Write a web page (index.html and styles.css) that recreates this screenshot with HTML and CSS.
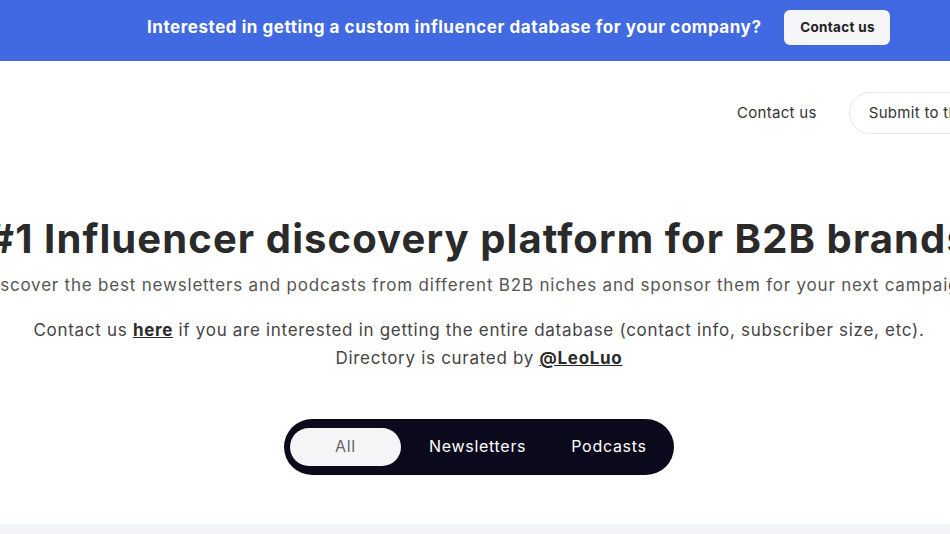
FILE: index.html
```html
<!DOCTYPE html>
<html lang="en">
<head>
<meta charset="utf-8">
<title>B2B Influencer discovery</title>
<link rel="stylesheet" href="styles.css">
</head>
<body>
<div class="banner">
  <p class="banner-text">Interested in getting a custom influencer database for your company?</p>
  <a class="banner-btn" href="#">Contact us</a>
</div>
<div class="page">
  <nav class="nav">
    <a class="nav-link" href="#">Contact us</a>
    <a class="nav-btn" href="#">Submit to the directory</a>
  </nav>
  <header class="hero">
    <h1 class="hero-title">#1 Influencer discovery platform for B2B brands</h1>
    <p class="hero-sub">Discover the best newsletters and podcasts from different B2B niches and sponsor them for your next campaign.</p>
    <p class="hero-note">Contact us <a href="#">here</a> if you are interested in getting the entire database (contact info, subscriber size, etc).</p>
    <p class="hero-note">Directory is curated by <a href="#">@LeoLuo</a></p>
  </header>
  <div class="tabs-row">
    <div class="tabs">
      <span class="tab tab-active">All</span>
      <span class="tab tab-news">Newsletters</span>
      <span class="tab tab-pod">Podcasts</span>
    </div>
  </div>
</div>
<div class="band"></div>
</body>
</html>
```
FILE: styles.css
```css
html, body {
  margin: 0;
  padding: 0;
  overflow: hidden;
  background: #ffffff;
  font-family: Inter, "Noto Sans", sans-serif;
}
a { color: inherit; text-decoration: none; }
p, h1 { margin: 0; }

.banner {
  height: 61px;
  box-sizing: border-box;
  padding-bottom: 7px;
  background: #4169e1;
  display: flex;
  align-items: center;
  padding-left: 147px;
  gap: 23px;
}
.banner-text {
  color: #ffffff;
  font-weight: 700;
  font-size: 17px;
  letter-spacing: 0.55px;
  white-space: nowrap;
}
.banner-btn {
  display: flex;
  align-items: center;
  justify-content: center;
  width: 106px;
  height: 35px;
  background: #f6f6f8;
  border-radius: 6px;
  color: #222;
  font-weight: 700;
  font-size: 13.5px;
  letter-spacing: 0.3px;
}

.page {
  width: 958px;
}
.nav {
  display: flex;
  align-items: center;
  padding: 30px 0 0 737px;
  gap: 32px;
  height: 44px;
  white-space: nowrap;
}
.nav-link {
  font-size: 15px;
  letter-spacing: 0.3px;
  color: #333;
  margin-top: -2px;
}
.nav-btn {
  display: flex;
  align-items: center;
  height: 42px;
  padding: 0 19px 2px;
  box-sizing: border-box;
  border: 1px solid #e6e6e6;
  border-radius: 22px;
  font-size: 15px;
  letter-spacing: 0.3px;
  color: #333;
  flex-shrink: 0;
}

.hero {
  display: flex;
  flex-direction: column;
  align-items: center;
  padding-top: 80px;
}
.hero-title {
  font-size: 40px;
  font-weight: 700;
  letter-spacing: 1.1px;
  color: #2a2a2a;
  white-space: nowrap;
  line-height: 48px;
}
.hero-sub {
  font-size: 17px;
  letter-spacing: 0.8px;
  color: #555;
  white-space: nowrap;
  line-height: 24px;
  margin-top: 10px;
}
.hero-note {
  font-size: 17px;
  letter-spacing: 0.7px;
  color: #444;
  white-space: nowrap;
  line-height: 28px;
}
.hero-sub + .hero-note { margin-top: 19px; }
.hero-note a {
  font-weight: 700;
  text-decoration: underline;
  color: #2a2a2a;
}

.tabs-row {
  display: flex;
  justify-content: center;
  padding-top: 47px;
}
.tabs {
  display: flex;
  align-items: center;
  background: #0b0a1c;
  border-radius: 28px;
  height: 56px;
  padding: 0 7px;
  width: 390px;
  box-sizing: border-box;
}
.tab {
  font-size: 16px;
  letter-spacing: 0.7px;
  color: #ffffff;
  display: flex;
  align-items: center;
  justify-content: center;
  height: 38px;
  padding-bottom: 3px;
  box-sizing: border-box;
  white-space: nowrap;
}
.tab-news { margin-left: 28px; }
.tab-pod { margin-left: 45px; }
.tab-active {
  background: #f5f5f7;
  color: #666;
  border-radius: 19px;
  width: 111px;
  margin-left: -1px;
}
.band {
  height: 20px;
  background: #f3f4f8;
  margin-top: 49px;
}
```
